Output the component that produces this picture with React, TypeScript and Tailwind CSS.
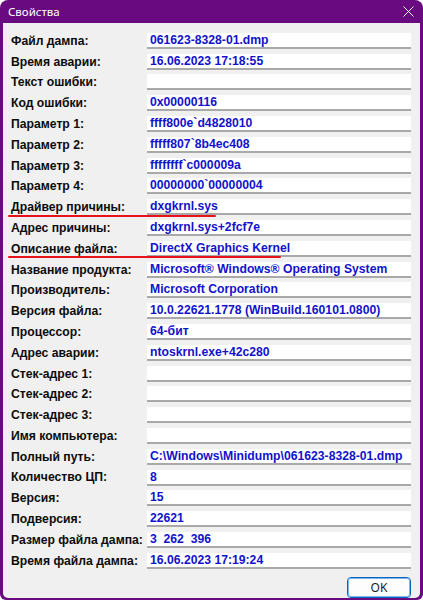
import React from 'react'

const rows: [string, string][] = [
    ["Файл дампа:", "061623-8328-01.dmp"],
    ["Время аварии:", "16.06.2023 17:18:55"],
    ["Текст ошибки:", ""],
    ["Код ошибки:", "0x00000116"],
    ["Параметр 1:", "ffff800e`d4828010"],
    ["Параметр 2:", "fffff807`8b4ec408"],
    ["Параметр 3:", "ffffffff`c000009a"],
    ["Параметр 4:", "00000000`00000004"],
    ["Драйвер причины:", "dxgkrnl.sys"],
    ["Адрес причины:", "dxgkrnl.sys+2fcf7e"],
    ["Описание файла:", "DirectX Graphics Kernel"],
    ["Название продукта:", "Microsoft® Windows® Operating System"],
    ["Производитель:", "Microsoft Corporation"],
    ["Версия файла:", "10.0.22621.1778 (WinBuild.160101.0800)"],
    ["Процессор:", "64-бит"],
    ["Адрес аварии:", "ntoskrnl.exe+42c280"],
    ["Стек-адрес 1:", ""],
    ["Стек-адрес 2:", ""],
    ["Стек-адрес 3:", ""],
    ["Имя компьютера:", ""],
    ["Полный путь:", "C:\\Windows\\Minidump\\061623-8328-01.dmp"],
    ["Количество ЦП:", "8"],
    ["Версия:", "15"],
    ["Подверсия:", "22621"],
    ["Размер файла дампа:", "3  262  396"],
    ["Время файла дампа:", "16.06.2023 17:19:24"],
]

// red hand-drawn marks under two rows
const marks: Record<number, string> = {
    8: "w-[208px]",
    10: "w-[273px]",
}

const Row = ({ label, value, mark }: { label: string, value: string, mark?: string }) => (
    <div className="relative flex items-center h-[20.8px]">
        <div className="w-[144px] shrink-0 pl-2 text-[12.2px] font-bold text-[#0c0c0c] whitespace-nowrap">{label}</div>
        <div className="flex-1 h-[16px] bg-white border-b-2 border-[#a9a9a9] flex items-center pl-[3px] text-[12.2px] font-bold text-[#1212cc] whitespace-pre leading-none">
            {value}
        </div>
        {mark && <div className={`absolute left-[5px] top-[18px] h-[2px] bg-[#e8121b] rounded-full ${mark}`} />}
    </div>
)

export default function App() {
    return (
        <div className="w-[423px] h-[600px] bg-[#6a0a80] rounded-t-[8px] rounded-b-[6px] flex flex-col overflow-hidden" style={{ fontFamily: '"Liberation Sans", Arial, sans-serif' }}>
            <div className="h-[23px] shrink-0 flex items-center justify-between pl-[8px] pr-[9px] text-white">
                <span className="text-[11.5px]" style={{ fontFamily: '"Noto Sans", sans-serif' }}>Свойства</span>
                <svg width="11" height="11" viewBox="0 0 11 11"><path d="M0.5 0.5 L10.5 10.5 M10.5 0.5 L0.5 10.5" stroke="white" strokeWidth="1" /></svg>
            </div>
            <div className="flex-1 mx-[3px] mb-[3px] bg-[#f0f0f0] rounded-b-[5px] flex flex-col pt-[7.5px] pr-[9px]">
                {rows.map(([l, v], i) => <Row key={i} label={l} value={v} mark={marks[i]} />)}
                <div className="flex justify-end mt-[6px]">
                    <button className="w-[64px] h-[21px] bg-[#fdfdfd] border border-[#0067c0] rounded-[4px] text-[12px] text-[#222] outline outline-1 outline-[#7eb4ea] -outline-offset-2" style={{ fontFamily: '"Noto Sans", sans-serif' }}>OK</button>
                </div>
            </div>
        </div>
    )
}
